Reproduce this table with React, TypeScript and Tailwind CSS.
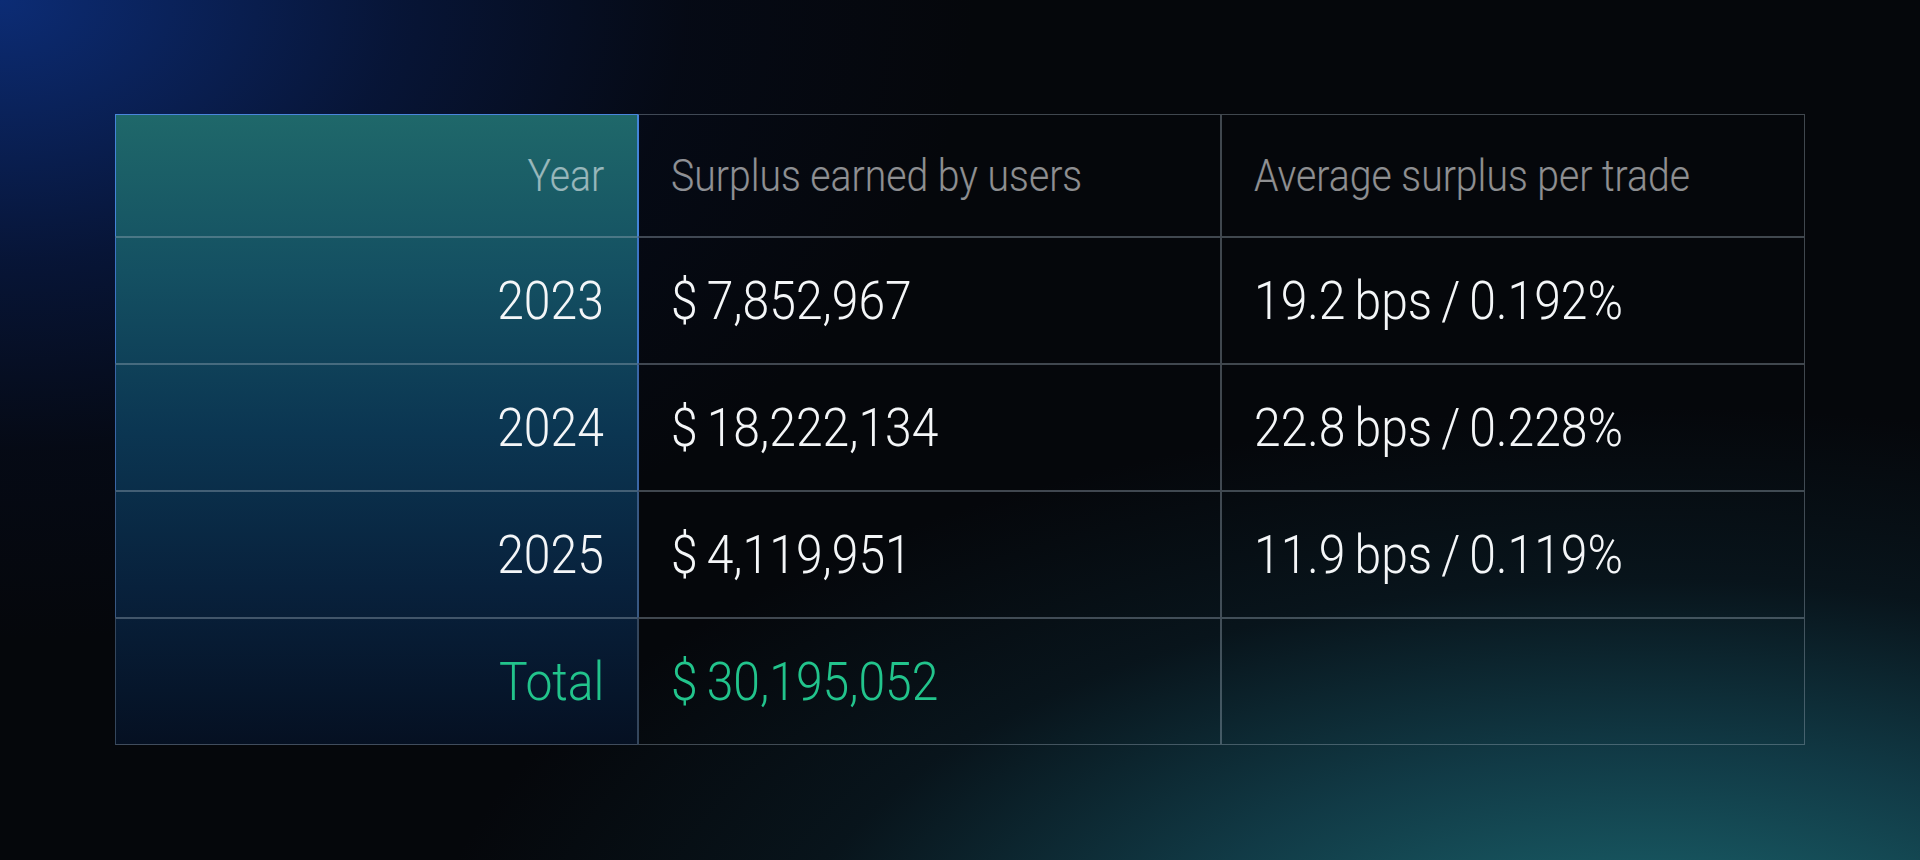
const rows = [
  { year: "2023", surplus: "$ 7,852,967", avg: "19.2 bps / 0.192%", side: "border-x-[#3d74c4]", left: "border-l-[#3d74c4]" },
  { year: "2024", surplus: "$ 18,222,134", avg: "22.8 bps / 0.228%", side: "border-x-[#3a66a6]", left: "border-l-[#3a66a6]" },
  { year: "2025", surplus: "$ 4,119,951", avg: "11.9 bps / 0.119%", side: "border-x-[#385882]", left: "border-l-[#385882]" },
];

const line = "border border-[rgba(160,175,190,0.38)]";

function Cell({ children, right, className = "" }: { children?: React.ReactNode; right?: boolean; className?: string }) {
  return (
    <div className={`${line} flex items-center ${right ? "justify-end pr-[33px]" : "pl-[32px]"} ${className}`}>
      {children}
    </div>
  );
}

function Txt({ children, right, head, color }: { children: React.ReactNode; right?: boolean; head?: boolean; color: string }) {
  return (
    <span
      className={`inline-block whitespace-nowrap font-light leading-none ${right ? "origin-right" : "origin-left"} ${
        head ? "text-[44px] scale-x-[0.89]" : "text-[54px] scale-x-[0.89] [word-spacing:-3px]"
      } ${color}`}
    >
      {children}
    </span>
  );
}

export default function App() {
  return (
    <div className="w-[1920px] h-[860px] overflow-hidden bg-[#05070b] bg-[image:radial-gradient(ellipse_1250px_820px_at_0%_0%,#0c2c75_0%,rgba(9,32,90,0.55)_32%,rgba(6,18,50,0.25)_55%,transparent_78%),radial-gradient(ellipse_1500px_720px_at_86%_116%,#1d7078_0%,rgba(22,80,95,0.7)_34%,rgba(14,45,58,0.35)_58%,transparent_82%)] font-['Roboto',sans-serif] pt-[114px] pl-[115px]">
      <div className="flex w-[1690px]">
        {/* year column with teal fill */}
        <div className="flex flex-col w-[523px] bg-[linear-gradient(180deg,#1f686a_0%,#145062_25%,#0b3652_50%,#08213c_75%,#051022_100%)]">
          <Cell right className="h-[123px] border-t-[#4a86dc] border-x-[#4484d8]">
            <Txt right head color="text-white/55">Year</Txt>
          </Cell>
          {rows.map((r) => (
            <Cell key={r.year} right className={`h-[127px] ${r.side}`}>
              <Txt right color="text-[#f4f6f8]">{r.year}</Txt>
            </Cell>
          ))}
          <Cell right className="h-[127px] border-x-[#34465c]">
            <Txt right color="text-[#22c48c]">Total</Txt>
          </Cell>
        </div>

        <div className="flex flex-col w-[583px]">
          <Cell className="h-[123px] border-l-[#4484d8]">
            <Txt head color="text-white/55">Surplus earned by users</Txt>
          </Cell>
          {rows.map((r) => (
            <Cell key={r.year} className={`h-[127px] ${r.left}`}>
              <Txt color="text-[#f4f6f8]">{r.surplus}</Txt>
            </Cell>
          ))}
          <Cell className="h-[127px] border-l-[#34465c]">
            <Txt color="text-[#22c48c]">$ 30,195,052</Txt>
          </Cell>
        </div>

        <div className="flex flex-col w-[584px]">
          <Cell className="h-[123px]">
            <Txt head color="text-white/55">Average surplus per trade</Txt>
          </Cell>
          {rows.map((r) => (
            <Cell key={r.year} className="h-[127px]">
              <Txt color="text-[#f4f6f8]">{r.avg}</Txt>
            </Cell>
          ))}
          <Cell className="h-[127px]" />
        </div>
      </div>
    </div>
  );
}
